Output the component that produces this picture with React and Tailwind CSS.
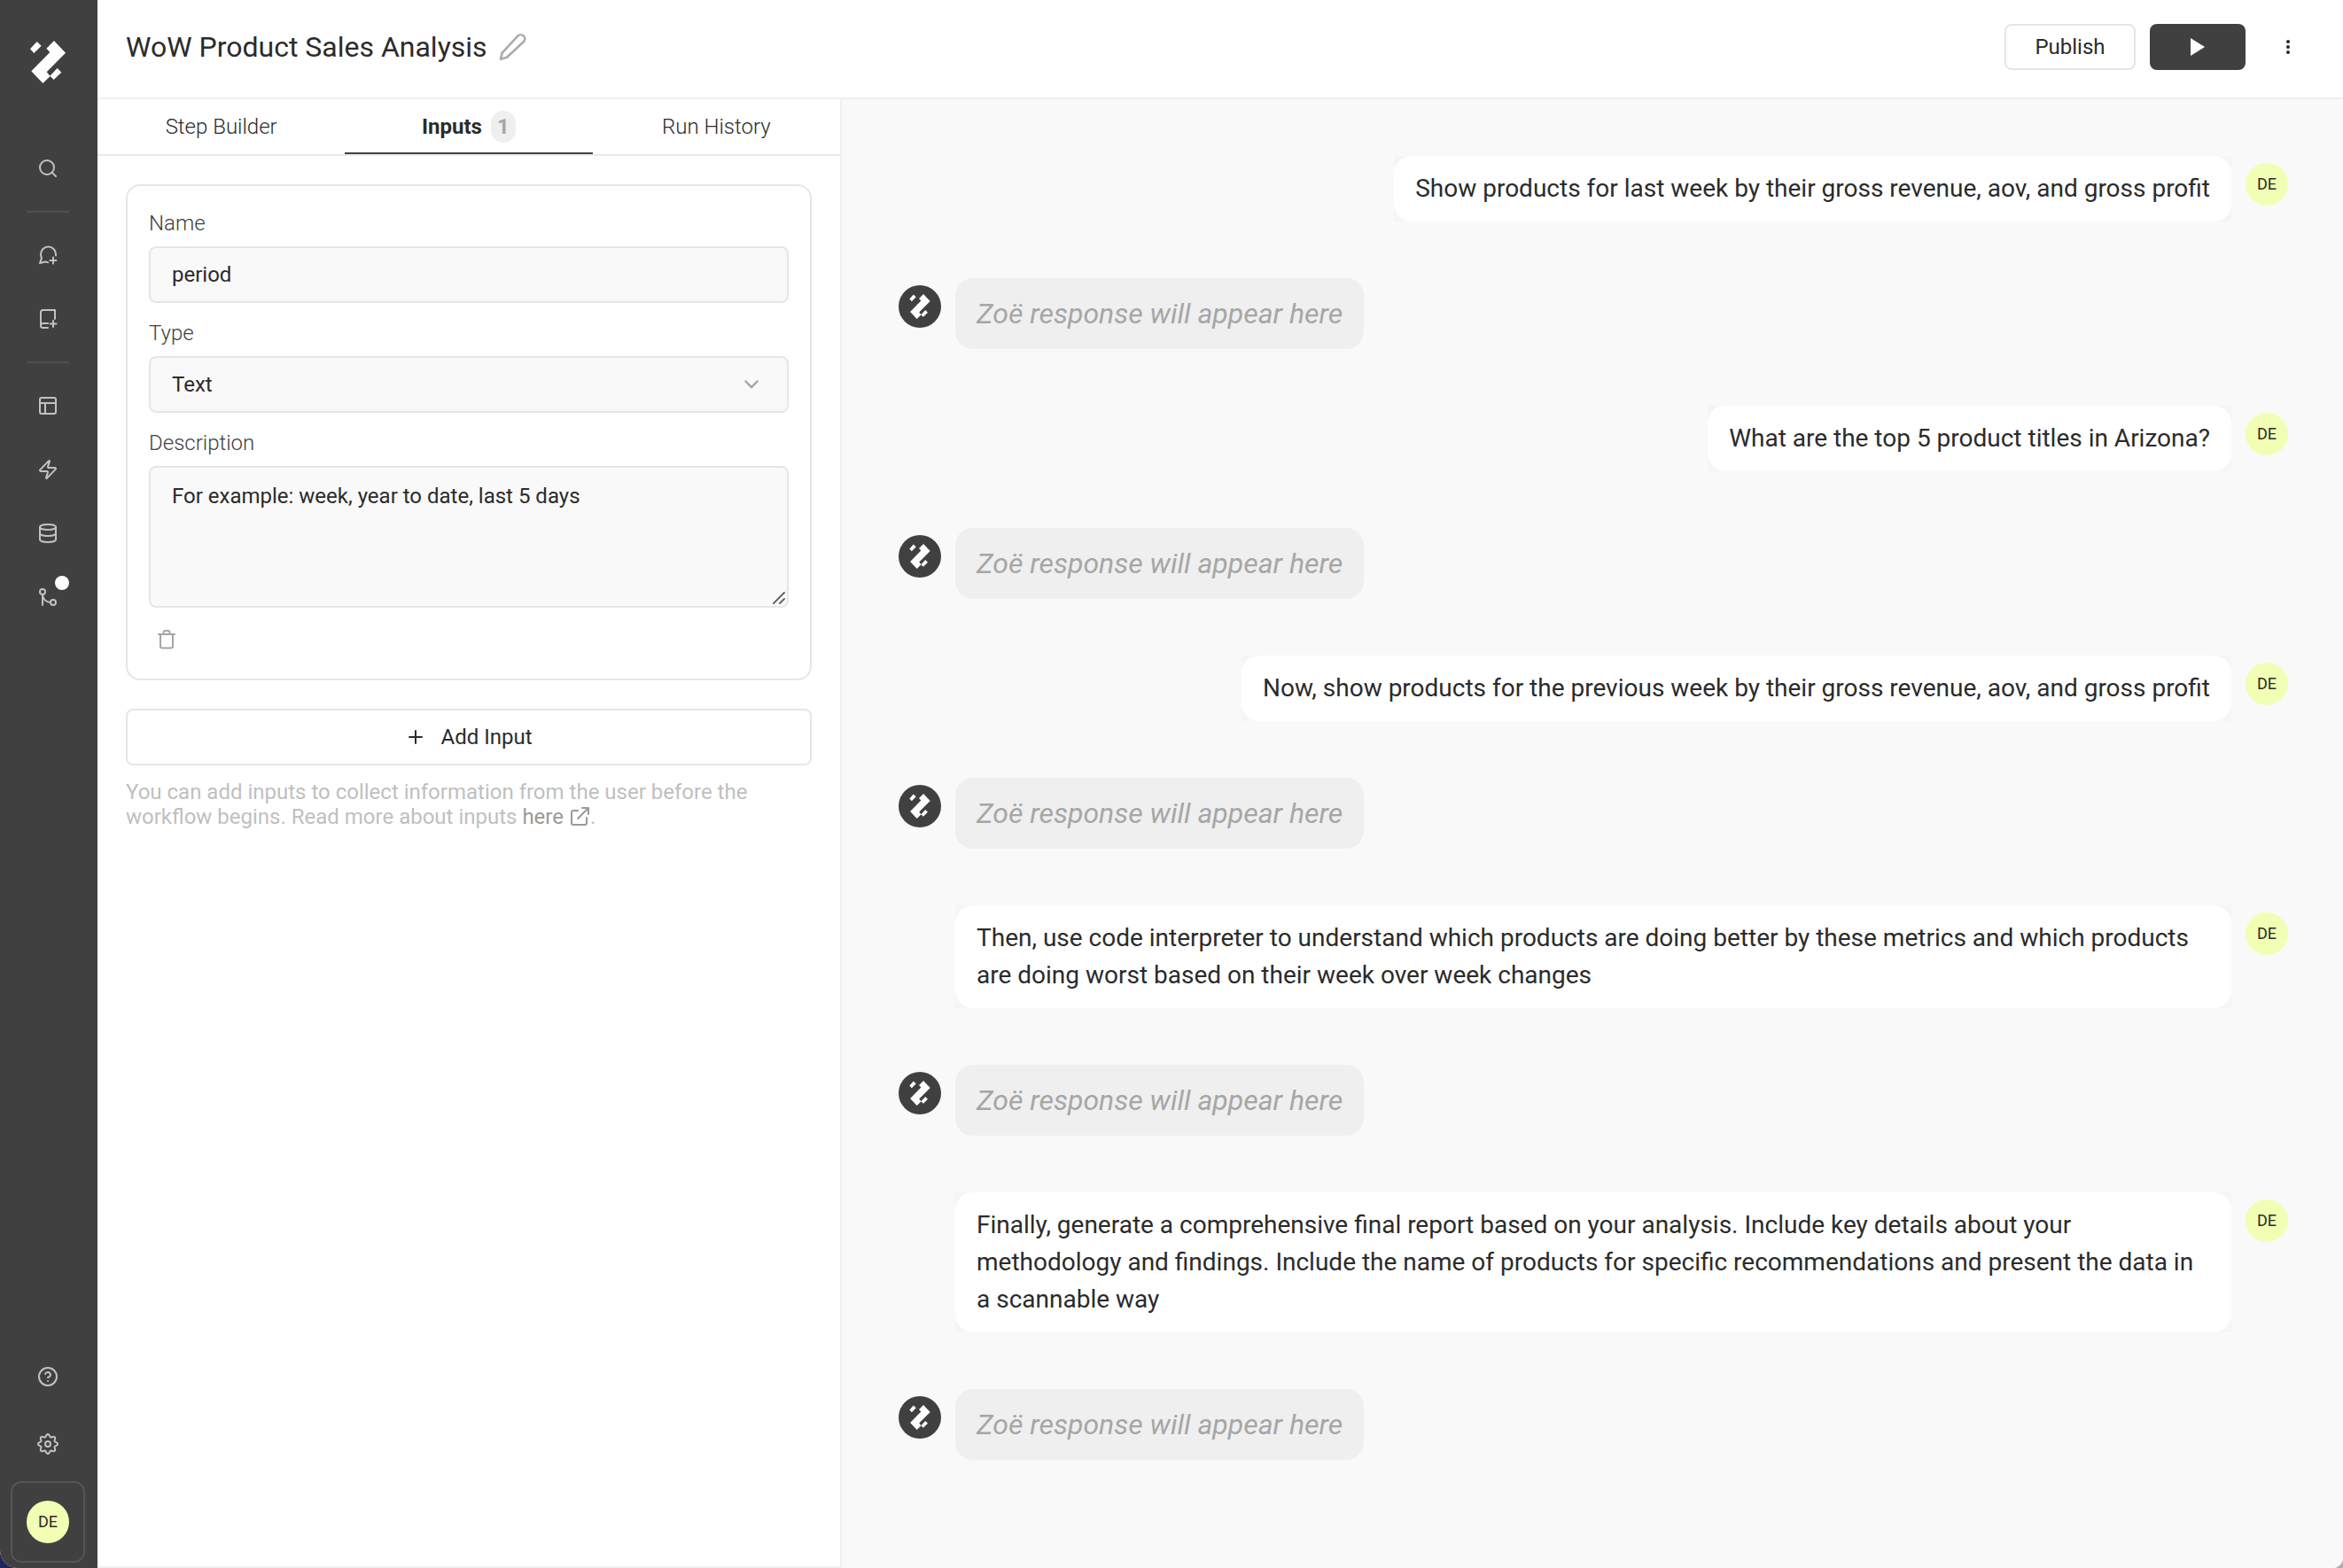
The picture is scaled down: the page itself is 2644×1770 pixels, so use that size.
import React from 'react';
import { Search, PanelsTopLeft, Zap, Database, CircleQuestionMark, Plus } from 'lucide-react';

const ZOE = 'Zoë response will appear here';

const MESSAGES = [
  'Show products for last week by their gross revenue, aov, and gross profit',
  'What are the top 5 product titles in Arizona?',
  'Now, show products for the previous week by their gross revenue, aov, and gross profit',
  'Then, use code interpreter to understand which products are doing better by these metrics and which products are doing worst based on their week over week changes',
  'Finally, generate a comprehensive final report based on your analysis. Include key details about your methodology and findings. Include the name of products for specific recommendations and present the data in a\u00a0scannable way',
];

// Outline of an eight-toothed gear around (13, 13).
const GEAR_POINTS = Array.from({ length: 160 }, (_, i) => {
  const t = (i / 160) * 2 * Math.PI;
  const r = 9.6 + 1.4 * Math.cos(8 * t);
  return (13 + r * Math.sin(t)).toFixed(2) + ',' + (13 - r * Math.cos(t)).toFixed(2);
}).join(' ');

function Logo({ className }) {
  return (
    <svg viewBox="30 29 120 144" className={className} fill="currentColor" aria-hidden="true">
      <path d="M111 29 150 70 86 135 98 149 73 173 34 132 97 68 85 55Z" />
      <path d="M53 32 68 46 43 71 30 57Z" />
      <path d="M122 122 136 136 110 161 97 148Z" />
    </svg>
  );
}

function Icon({ className = 'size-6', width = 2, viewBox = '0 0 24 24', children }) {
  return (
    <svg
      viewBox={viewBox}
      className={className}
      fill="none"
      stroke="currentColor"
      strokeWidth={width}
      strokeLinecap="round"
      strokeLinejoin="round"
      aria-hidden="true"
    >
      {children}
    </svg>
  );
}

function ChatPlus() {
  return (
    <Icon>
      <path d="M21 12.500V11a8.500 8.500 0 0 0-17 0c0 1.800.3 3 1 4.300L3 21l5-1.300c1.500-.3 2.700-.1 4.200.6" />
      <path d="M18 14.500v7M14.500 18h7" />
    </Icon>
  );
}

function BookPlus() {
  return (
    <Icon>
      <path d="M20 12V2H6.500A2.500 2.500 0 0 0 4 4.500v15A2.500 2.500 0 0 0 6.500 22H12" />
      <path d="M4 19a2.500 2.500 0 0 1 2.500-2H12M18 14v7M14.500 17.500h7" />
    </Icon>
  );
}

function Branch() {
  return (
    <Icon>
      <circle cx="6" cy="6" r="3" />
      <circle cx="18" cy="18" r="3" />
      <path d="M6 9v12M6 9a9 9 0 0 0 9 9" />
    </Icon>
  );
}

function Gear() {
  return (
    <Icon viewBox="0 0 26 26" className="size-[26px]">
      <circle cx="13" cy="13" r="3" />
      <polygon points={GEAR_POINTS} />
    </Icon>
  );
}

function NavButton({ label, children }) {
  return (
    <button type="button" aria-label={label} className="flex h-18 w-18 items-center justify-center text-[#c2c2c2]">
      {children}
    </button>
  );
}

function Divider() {
  return <hr className="my-3 h-0.5 w-12 border-0 bg-[#505050]" />;
}

function Initials() {
  return (
    <span className="flex size-12 shrink-0 items-center justify-center rounded-full bg-[#f0ffb3] text-lg leading-6 text-[#2b2b2b]">
      DE
    </span>
  );
}

function Sidebar() {
  return (
    <nav className="flex w-[110px] shrink-0 flex-col items-center bg-[#404040] pr-0.5 pb-1.5">
      <a href="#home" aria-label="Home" className="flex h-[154px] items-start pt-[46px] text-white">
        <Logo className="h-12 w-10" />
      </a>
      <NavButton label="Search"><Search className="size-6" /></NavButton>
      <Divider />
      <NavButton label="New chat"><ChatPlus /></NavButton>
      <NavButton label="New notebook"><BookPlus /></NavButton>
      <Divider />
      <NavButton label="Boards"><PanelsTopLeft className="size-6" /></NavButton>
      <NavButton label="Actions"><Zap className="size-6" /></NavButton>
      <NavButton label="Data"><Database className="size-6" /></NavButton>
      <NavButton label="Workflows">
        <span className="relative">
          <Branch />
          <span className="absolute -top-3 -right-3 size-4 rounded-full bg-white" />
        </span>
      </NavButton>
      <div className="mt-auto">
        <NavButton label="Help"><CircleQuestionMark className="size-6" /></NavButton>
      </div>
      <div className="mt-1">
        <NavButton label="Settings"><Gear /></NavButton>
      </div>
      <button
        type="button"
        aria-label="Account"
        className="mt-1.5 flex h-[92px] w-[84px] items-center justify-center rounded-xl border-2 border-[#555555]"
      >
        <Initials />
      </button>
    </nav>
  );
}

function Header() {
  return (
    <header className="flex h-28 shrink-0 items-center border-b-2 border-[#efefef] pr-[38px] pb-1 pl-8">
      <h1 className="text-[32px] leading-10">WoW Product Sales Analysis</h1>
      <button type="button" aria-label="Rename" className="ml-3 text-[#acacac]">
        <Icon viewBox="20 23 96 96" className="size-8" width={8}>
          <path d="M29 112 34 91 87 34A13.500 13.500 0 0 1 107 53L50 106Z" />
        </Icon>
      </button>
      <div className="ml-auto flex items-center">
        <button type="button" className="h-13 w-[148px] rounded-lg border-2 border-[#e6e6e6] text-2xl">
          Publish
        </button>
        <button
          type="button"
          aria-label="Run"
          className="ml-4 flex h-13 w-27 items-center justify-center rounded-lg bg-[#404040] text-white"
        >
          <svg viewBox="0 0 16 20" className="h-5 w-4" fill="currentColor" aria-hidden="true">
            <path d="M0 0 16 10 0 20Z" />
          </svg>
        </button>
        <button type="button" aria-label="More" className="ml-6 flex size-12 items-center justify-center">
          <svg viewBox="0 0 4 16" className="h-4 w-1" fill="currentColor" aria-hidden="true">
            <circle cx="2" cy="2" r="2" />
            <circle cx="2" cy="8" r="2" />
            <circle cx="2" cy="14" r="2" />
          </svg>
        </button>
      </div>
    </header>
  );
}

const TAB = 'flex flex-1 items-center justify-center border-b-2 pt-px text-2xl';
const LABEL = 'block mb-2 text-2xl leading-9 font-light text-[#404040]';
const FIELD = 'block w-full rounded-lg border-2 border-[#e6e6e6] bg-[#f9f9f9] px-6 text-2xl outline-none';

function Panel() {
  return (
    <section className="flex w-[840px] shrink-0 flex-col border-r-2 border-b-2 border-[#efefef]">
      <div role="tablist" className="flex h-16 border-b-2 border-[#e9e9e9]">
        <button type="button" role="tab" className={TAB + ' border-transparent font-light'}>Step Builder</button>
        <button type="button" role="tab" aria-selected="true" className={TAB + ' gap-2.5 border-[#404040] font-bold'}>
          Inputs
          <span className="flex h-9 w-7 items-center justify-center rounded-full bg-[#efefef] text-[#a6a6a6]">1</span>
        </button>
        <button type="button" role="tab" className={TAB + ' border-transparent font-light'}>Run History</button>
      </div>
      <div className="p-8">
        <div className="rounded-2xl border-2 border-[#e6e6e6] p-6">
          <label htmlFor="name" className={LABEL}>Name</label>
          <input id="name" defaultValue="period" className={FIELD + ' h-16'} />
          <label htmlFor="type" className={LABEL + ' mt-4'}>Type</label>
          <div className="relative">
            <select id="type" className={FIELD + ' h-16 appearance-none'}>
              <option>Text</option>
            </select>
            <Icon
              viewBox="0 0 16 10"
              width={2.5}
              className="pointer-events-none absolute top-[27px] right-[34px] h-2.5 w-4 text-[#a6a6a6]"
            >
              <path d="M1.500 1.500 8 8.200 14.500 1.500" />
            </Icon>
          </div>
          <label htmlFor="description" className={LABEL + ' mt-4'}>Description</label>
          <div className="relative">
            <textarea
              id="description"
              defaultValue="For example: week, year to date, last 5 days"
              className={FIELD + ' h-40 resize-none py-4 leading-8'}
            />
            <Icon
              viewBox="0 0 14 14"
              width={2}
              className="pointer-events-none absolute right-1 bottom-1 size-3.5 text-[#666666]"
            >
              <path d="M1 13 13 1M8 13l5-5" />
            </Icon>
          </div>
          <button
            type="button"
            aria-label="Delete input"
            className="mt-4 flex size-10 items-center justify-center text-[#a6a6a6]"
          >
            <Icon>
              <path d="M3 6h18M5 6v13.500a2 2 0 0 0 2 2h10a2 2 0 0 0 2-2V6M8.500 6V4a2 2 0 0 1 2-2h3a2 2 0 0 1 2 2v2" />
            </Icon>
          </button>
        </div>
        <button
          type="button"
          className="mt-8 flex h-16 w-full items-center justify-center gap-4 rounded-lg border-2 border-[#e6e6e6] text-2xl"
        >
          <Plus className="size-6" />
          Add Input
        </button>
        <p className="mt-4 text-2xl leading-7 text-[#bfbfbf]">
          You can add inputs to collect information from the user before the workflow begins. Read more about inputs{' '}
          <a href="#inputs" className="text-[#999999]">
            here
            <Icon className="ml-1.5 inline size-6 align-[-4px]">
              <path d="M20 13v6a2 2 0 0 1-2 2H5a2 2 0 0 1-2-2V7a2 2 0 0 1 2-2h5M15 2h7v7M10 14 22 2" />
            </Icon>
          </a>
          .
        </p>
      </div>
    </section>
  );
}

function Chat() {
  return (
    <section className="flex flex-1 flex-col gap-16 bg-[#f9f9f9] py-16 pr-[62px] pl-16">
      {MESSAGES.map((text) => (
        <React.Fragment key={text}>
          <div className="flex items-start justify-end gap-4 pl-16">
            <div className="bg-[#f5f5f5]">
              <p className="rounded-[20px] bg-white px-6 py-4 text-[28px] leading-[42px]">{text}</p>
            </div>
            <div className="mt-2"><Initials /></div>
          </div>
          <div className="flex items-start gap-4">
            <span className="mt-2 flex size-12 shrink-0 items-center justify-center rounded-full bg-[#404040] text-white">
              <Logo className="h-7 w-6" />
            </span>
            <p className="rounded-[20px] bg-[#efefef] px-6 py-4 text-[32px] leading-[48px] text-[#a6a6a6] italic">{ZOE}</p>
          </div>
        </React.Fragment>
      ))}
    </section>
  );
}

export default function App() {
  return (
    <div className="bg-[linear-gradient(90deg,#20265c,#b0b0b0)] font-[Roboto,sans-serif] text-[#2b2b2b]">
      <div className="flex min-h-screen overflow-hidden rounded-br-xl rounded-bl-[20px] bg-white">
        <Sidebar />
        <div className="flex min-w-0 flex-1 flex-col">
          <Header />
          <main className="flex flex-1">
            <Panel />
            <Chat />
          </main>
        </div>
      </div>
    </div>
  );
}
